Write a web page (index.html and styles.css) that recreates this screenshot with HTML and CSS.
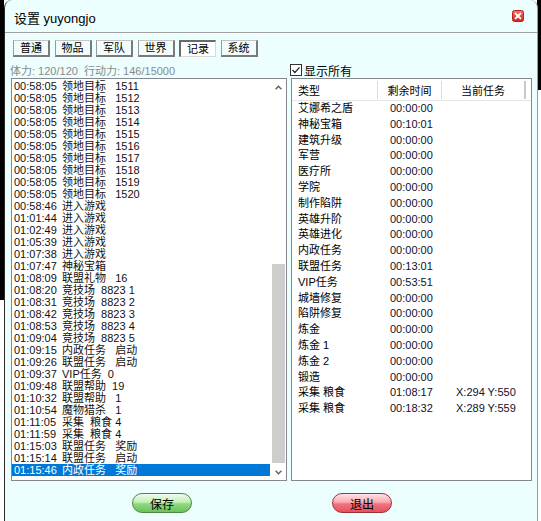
FILE: index.html
```html
<!DOCTYPE html>
<html lang="zh">
<head>
<meta charset="utf-8">
<title>设置 yuyongjo</title>
<link rel="stylesheet" href="styles.css">
</head>
<body>
<div class="win">
  <div class="titlebar">
    <span class="title">设置 yuyongjo</span>
    <span class="close"><svg width="12" height="12" viewBox="0 0 12 12"><defs><linearGradient id="cg" x1="0" y1="0" x2="0" y2="1"><stop offset="0" stop-color="#f57466"/><stop offset="1" stop-color="#cf2419"/></linearGradient></defs><rect x=".5" y=".5" width="11" height="11" rx="2" fill="url(#cg)" stroke="#b3261e"/><path d="M3.6 3.6l4.8 4.8M8.4 3.6l-4.8 4.8" stroke="#fff" stroke-width="2" stroke-linecap="round"/></svg></span>
  </div>
  <div class="content">
    <div class="tabs">
      <div class="tab">普通</div>
      <div class="tab">物品</div>
      <div class="tab">军队</div>
      <div class="tab">世界</div>
      <div class="tab active">记录</div>
      <div class="tab">系统</div>
    </div>
    <div class="toprow">
      <div class="stats">体力: 120/120&nbsp; 行动力: 146/15000</div>
      <label class="chk"><svg width="12" height="12" viewBox="0 0 12 12"><rect x=".5" y=".5" width="11" height="11" fill="#fff" stroke="#333"/><path d="M2.5 6l2.4 2.5 4.6-5.2" stroke="#222" fill="none" stroke-width="1.2"/></svg><span>显示所有</span></label>
    </div>
    <div class="panes">
      <div class="log">
        <div class="rows">
          <div class="r"><span class="t">00:58:05</span>领地目标   1511</div>
          <div class="r"><span class="t">00:58:05</span>领地目标   1512</div>
          <div class="r"><span class="t">00:58:05</span>领地目标   1513</div>
          <div class="r"><span class="t">00:58:05</span>领地目标   1514</div>
          <div class="r"><span class="t">00:58:05</span>领地目标   1515</div>
          <div class="r"><span class="t">00:58:05</span>领地目标   1516</div>
          <div class="r"><span class="t">00:58:05</span>领地目标   1517</div>
          <div class="r"><span class="t">00:58:05</span>领地目标   1518</div>
          <div class="r"><span class="t">00:58:05</span>领地目标   1519</div>
          <div class="r"><span class="t">00:58:05</span>领地目标   1520</div>
          <div class="r"><span class="t">00:58:46</span>进入游戏</div>
          <div class="r"><span class="t">01:01:44</span>进入游戏</div>
          <div class="r"><span class="t">01:02:49</span>进入游戏</div>
          <div class="r"><span class="t">01:05:39</span>进入游戏</div>
          <div class="r"><span class="t">01:07:38</span>进入游戏</div>
          <div class="r"><span class="t">01:07:47</span>神秘宝箱</div>
          <div class="r"><span class="t">01:08:09</span>联盟礼物   16</div>
          <div class="r"><span class="t">01:08:20</span>竞技场  8823 1</div>
          <div class="r"><span class="t">01:08:31</span>竞技场  8823 2</div>
          <div class="r"><span class="t">01:08:42</span>竞技场  8823 3</div>
          <div class="r"><span class="t">01:08:53</span>竞技场  8823 4</div>
          <div class="r"><span class="t">01:09:04</span>竞技场  8823 5</div>
          <div class="r"><span class="t">01:09:15</span>内政任务   启动</div>
          <div class="r"><span class="t">01:09:26</span>联盟任务   启动</div>
          <div class="r"><span class="t">01:09:37</span>VIP任务  0</div>
          <div class="r"><span class="t">01:09:48</span>联盟帮助  19</div>
          <div class="r"><span class="t">01:10:32</span>联盟帮助   1</div>
          <div class="r"><span class="t">01:10:54</span>魔物猎杀   1</div>
          <div class="r"><span class="t">01:11:05</span>采集  粮食 4</div>
          <div class="r"><span class="t">01:11:59</span>采集  粮食 4</div>
          <div class="r"><span class="t">01:15:03</span>联盟任务   奖励</div>
          <div class="r"><span class="t">01:15:14</span>联盟任务   启动</div>
          <div class="r sel"><span class="t">01:15:46</span>内政任务   奖励</div>
        </div>
        <div class="sb">
          <div class="arrow"><svg width="7" height="5" viewBox="0 0 7 5"><polyline points="0.6,4.2 3.5,1.2 6.4,4.2" fill="none" stroke="#606060" stroke-width="1.4"/></svg></div>
          <div class="thumb"></div>
          <div class="arrow down"><svg width="7" height="5" viewBox="0 0 7 5"><polyline points="0.6,0.8 3.5,3.8 6.4,0.8" fill="none" stroke="#606060" stroke-width="1.4"/></svg></div>
        </div>
      </div>
      <div class="tbl">
        <div class="thead">
          <div class="th left">类型</div>
          <div class="th">剩余时间</div>
          <div class="th last">当前任务</div>
          <div></div>
        </div>
        <div class="trow"><span>艾娜希之盾</span><span>00:00:00</span><span></span></div>
        <div class="trow"><span>神秘宝箱</span><span>00:10:01</span><span></span></div>
        <div class="trow"><span>建筑升级</span><span>00:00:00</span><span></span></div>
        <div class="trow"><span>军营</span><span>00:00:00</span><span></span></div>
        <div class="trow"><span>医疗所</span><span>00:00:00</span><span></span></div>
        <div class="trow"><span>学院</span><span>00:00:00</span><span></span></div>
        <div class="trow"><span>制作陷阱</span><span>00:00:00</span><span></span></div>
        <div class="trow"><span>英雄升阶</span><span>00:00:00</span><span></span></div>
        <div class="trow"><span>英雄进化</span><span>00:00:00</span><span></span></div>
        <div class="trow"><span>内政任务</span><span>00:00:00</span><span></span></div>
        <div class="trow"><span>联盟任务</span><span>00:13:01</span><span></span></div>
        <div class="trow"><span>VIP任务</span><span>00:53:51</span><span></span></div>
        <div class="trow"><span>城墙修复</span><span>00:00:00</span><span></span></div>
        <div class="trow"><span>陷阱修复</span><span>00:00:00</span><span></span></div>
        <div class="trow"><span>炼金</span><span>00:00:00</span><span></span></div>
        <div class="trow"><span>炼金 1</span><span>00:00:00</span><span></span></div>
        <div class="trow"><span>炼金 2</span><span>00:00:00</span><span></span></div>
        <div class="trow"><span>锻造</span><span>00:00:00</span><span></span></div>
        <div class="trow"><span>采集 粮食</span><span>01:08:17</span><span>X:294 Y:550</span></div>
        <div class="trow"><span>采集 粮食</span><span>00:18:32</span><span>X:289 Y:559</span></div>
      </div>
    </div>
    <div class="btns">
      <div class="btn green">保存</div>
      <div class="btn red">退出</div>
    </div>
  </div>
</div>
</body>
</html>
```
FILE: styles.css
```css
html, body {
  margin: 0;
  padding: 0;
}
body {
  width: 541px;
  height: 521px;
  overflow: hidden;
  background:
    linear-gradient(#000, #000) left top / 4px 300px no-repeat,
    linear-gradient(#000, #000) right top / 4px 90px no-repeat,
    #fff;
  font-family: "Liberation Sans", "Noto Sans CJK SC", sans-serif;
  font-size: 11px;
  color: #111;
}
.win {
  margin-left: 4px;
  width: 532px;
  height: 521px;
  border-left: 1px solid #2a2a2a;
  border-right: 1px solid #9a9a9a;
  background: #ecfefe;
  border-radius: 8px 8px 0 0;
  display: flex;
  flex-direction: column;
}
.titlebar {
  height: 32px;
  border-bottom: 1px solid #a0a0a0;
  display: flex;
  align-items: flex-start;
  justify-content: space-between;
  padding: 0 13px 0 9px;
}
.title {
  font-size: 13px;
  line-height: 15px;
  margin-top: 11px;
  color: #000;
}
.close {
  margin-top: 10px;
  width: 12px;
  height: 12px;
  display: flex;
}
.content {
  flex: 1;
  display: flex;
  flex-direction: column;
  padding: 7px 5px 0 6px;
}
.tabs {
  display: flex;
  gap: 4.5px;
  margin-left: 2px;
  height: 17px;
}
.tab {
  width: 37px;
  height: 17px;
  box-sizing: border-box;
  display: flex;
  align-items: center;
  justify-content: center;
  background: #f2fcfc;
  border-style: solid;
  border-width: 1px 2px 2px 1px;
  border-color: #c4c4c4 #7a7a7a #7a7a7a #9a9a9a;
  color: #000;
  line-height: 13px;
}
.tab.active {
  background: #fff;
  border-width: 2px 1px 1px 2px;
  border-color: #6a6a6a #d8d8d8 #d8d8d8 #6a6a6a;
}
.toprow {
  height: 21px;
  box-sizing: border-box;
  padding-top: 5px;
  display: flex;
  align-items: center;
}
.stats {
  width: 280px;
  margin-left: -1px;
  color: #8a8a8a;
}
.chk {
  display: flex;
  align-items: center;
  gap: 2px;
  font-size: 12px;
  color: #000;
}
.chk svg {
  display: block;
}
.panes {
  display: flex;
  gap: 4px;
  height: 403px;
}
.log {
  width: 276px;
  box-sizing: border-box;
  border: 1px solid #828790;
  background: #fff;
  display: flex;
}
.rows {
  flex: 1;
  padding-top: 1px;
}
.r {
  height: 12px;
  line-height: 12px;
  padding-left: 2px;
  white-space: pre;
  color: #141010;
}
.r .t {
  display: inline-block;
  width: 48px;
}
.r.sel {
  background: #0078d7;
  color: #fff;
}
.sb {
  width: 16px;
  display: flex;
  flex-direction: column;
  background: #fff;
}
.arrow {
  height: 16px;
  display: flex;
  align-items: center;
  justify-content: center;
}
.arrow.down {
  margin-top: auto;
}
.thumb {
  margin: 169px 1px 0 2px;
  height: 199px;
  background: #cdcdcd;
}
.tbl {
  width: 241px;
  box-sizing: border-box;
  border: 1px solid #828790;
  background: #fff;
}
.thead {
  display: grid;
  grid-template-columns: 86px 64px 84px 1fr;
  height: 22px;
  box-sizing: border-box;
  border-bottom: 1px solid #e5e5e5;
}
.th {
  display: flex;
  align-items: center;
  justify-content: center;
  border-right: 1px solid #dcdcdc;
  margin: 2px 0 1px;
  color: #000;
}
.th.left {
  justify-content: flex-start;
  padding-left: 6px;
}
.th.last {
  border-right: 2px solid #c8c8c8;
}
.trow {
  display: grid;
  grid-template-columns: 86px 64px 84px;
  height: 15.8px;
  line-height: 15.8px;
  color: #000;
  white-space: pre;
}
.trow span:nth-child(1) { padding-left: 6px; }
.trow span:nth-child(2) { padding-left: 12px; color: #10102a; }
.trow span:nth-child(3) { padding-left: 14px; color: #10102a; }
.btns {
  flex: 1;
  display: flex;
  align-items: flex-start;
  padding-top: 12px;
}
.btn {
  width: 60px;
  height: 20px;
  box-sizing: border-box;
  border-radius: 10px;
  display: flex;
  align-items: center;
  justify-content: center;
  font-size: 12px;
  color: #000;
}
.btn.green {
  margin-left: 121px;
  border: 1px solid #4a8a40;
  background: linear-gradient(#effced 0%, #c4efb6 45%, #90d880 55%, #6cc25c 100%);
}
.btn.red {
  margin-left: 140px;
  border: 1px solid #a0323a;
  background: linear-gradient(#ffe2e4 0%, #f9aab2 45%, #f07482 55%, #e4505f 100%);
}
```
